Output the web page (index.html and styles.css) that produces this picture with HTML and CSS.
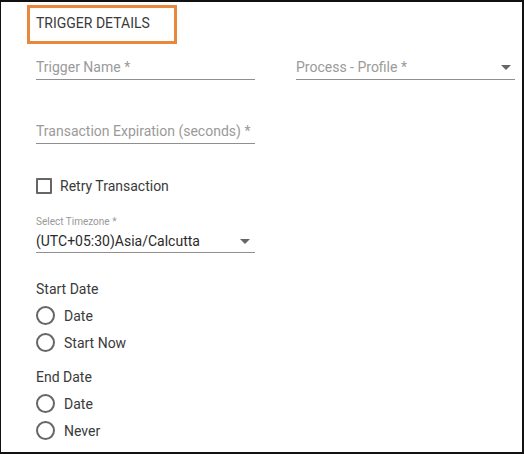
FILE: index.html
```html
<!DOCTYPE html>
<html>
<head>
<meta charset="utf-8">
<link rel="stylesheet" href="styles.css">
</head>
<body>
<div class="frame">
  <div class="header"><span>TRIGGER DETAILS</span></div>
  <div class="row row-1">
    <div class="field"><span class="ph">Trigger Name *</span></div>
    <div class="field select"><span class="ph">Process - Profile *</span><span class="caret"></span></div>
  </div>
  <div class="row row-2">
    <div class="field"><span class="ph">Transaction Expiration (seconds) *</span></div>
  </div>
  <label class="check"><span class="box"></span><span>Retry Transaction</span></label>
  <div class="tz">
    <div class="tz-label">Select Timezone *</div>
    <div class="field select tz-field"><span class="val">(UTC+05:30)Asia/Calcutta</span><span class="caret"></span></div>
  </div>
  <div class="group start">
    <div class="group-title">Start Date</div>
    <div class="radio"><span class="circle"></span><span>Date</span></div>
    <div class="radio"><span class="circle"></span><span>Start Now</span></div>
  </div>
  <div class="group end">
    <div class="group-title">End Date</div>
    <div class="radio"><span class="circle"></span><span>Date</span></div>
    <div class="radio"><span class="circle"></span><span>Never</span></div>
  </div>
</div>
</body>
</html>
```
FILE: styles.css
```css
html, body {
  margin: 0;
  padding: 0;
  background: #fff;
}
.frame {
  width: 524px;
  height: 454px;
  box-sizing: border-box;
  border: 2px solid #111;
  border-left-width: 1px;
  background: #fff;
  font-family: Roboto, "Liberation Sans", sans-serif;
  color: #3a3a3a;
  font-size: 14px;
  overflow: hidden;
}
.header {
  margin: 3px 0 0 26px;
  width: 150px;
  height: 39px;
  box-sizing: border-box;
  border: 3px solid #e8883c;
  display: flex;
  align-items: center;
  padding: 0 0 3px 6px;
  font-size: 14px;
  color: #3a3a3a;
}
.row {
  display: flex;
  gap: 41px;
  padding-left: 35px;
}
.row-1 { margin-top: 13px; }
.row-2 { margin-top: 41px; }
.field {
  width: 219px;
  line-height: 20px;
  padding-bottom: 2px;
  border-bottom: 1px solid #8f8f8f;
  display: flex;
  align-items: center;
  justify-content: space-between;
}
.ph { color: #9a9a9a; }
.val { color: #2a2a2a; }
.caret {
  width: 0;
  height: 0;
  border-left: 5px solid transparent;
  border-right: 5px solid transparent;
  border-top: 5px solid #666;
  margin-right: 4px;
}
.check {
  display: flex;
  align-items: center;
  gap: 8px;
  margin: 32px 0 0 35px;
  height: 20px;
}
.box {
  width: 16px;
  height: 16px;
  box-sizing: border-box;
  border: 2px solid #666;
  border-radius: 1px;
}
.tz {
  margin: 20px 0 0 35px;
}
.tz-label {
  font-size: 10px;
  line-height: 12px;
  color: #999;
}
.tz-field {
  margin-top: 3px;
  padding-bottom: 1px;
}
.tz-field .caret { margin-right: 5px; }
.group {
  padding-left: 35px;
}
.start { margin-top: 26px; }
.end { margin-top: 0; }
.group-title {
  line-height: 20px;
}
.start .group-title { margin-bottom: 3px; }
.end .group-title { margin-top: 11px; margin-bottom: 3px; }
.radio {
  display: flex;
  align-items: center;
  gap: 9px;
  height: 27px;
}
.circle {
  width: 19px;
  height: 19px;
  box-sizing: border-box;
  border: 2px solid #666;
  border-radius: 50%;
}
```
